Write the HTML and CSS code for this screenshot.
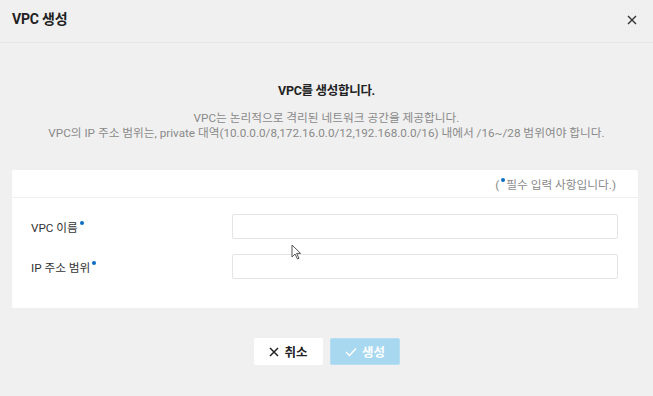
FILE: index.html
```html
<!DOCTYPE html>
<html lang="ko">
<head>
    <meta charset="UTF-8">
    <meta name="viewport" content="width=device-width, initial-scale=1.0">
    <title>VPC 생성</title>
    <link rel="stylesheet" href="styles.css">
</head>
<body>
    <div class="modal">
        <div class="modal-header">
            <h2>VPC 생성</h2>
            <button class="close-btn" aria-label="닫기">
                <svg width="10" height="10" viewBox="0 0 10 10">
                    <path d="M1 1L9 9M9 1L1 9" stroke="#333" stroke-width="1.4" fill="none"/>
                </svg>
            </button>
        </div>

        <div class="intro">
            <h3>VPC를 생성합니다.</h3>
            <p>VPC는 논리적으로 격리된 네트워크 공간을 제공합니다.</p>
            <p>VPC의 IP 주소 범위는, private 대역(10.0.0.0/8,172.16.0.0/12,192.168.0.0/16) 내에서 /16~/28 범위여야 합니다.</p>
        </div>

        <div class="card">
            <div class="card-top">
                <span class="required-note">(<span class="dot"></span>필수 입력 사항입니다.)</span>
            </div>
            <div class="form">
                <div class="form-row">
                    <label class="label">VPC 이름<span class="dot"></span></label>
                    <input type="text" class="input">
                </div>
                <div class="form-row">
                    <label class="label">IP 주소 범위<span class="dot"></span></label>
                    <input type="text" class="input">
                </div>
            </div>
            <!-- mouse pointer captured in the screenshot -->
            <svg class="cursor" width="11" height="16" viewBox="0 0 11 16">
                <path d="M1 1L1 13L4 10L6.5 15L8 14.3L5.6 9.4L9.6 9.4Z" fill="#fff" stroke="#555" stroke-width="1"/>
            </svg>
        </div>

        <div class="actions">
            <button class="btn cancel-btn">
                <svg width="10" height="10" viewBox="0 0 10 10">
                    <path d="M1 1L9 9M9 1L1 9" stroke="#222" stroke-width="1.5" fill="none"/>
                </svg>
                취소
            </button>
            <button class="btn create-btn">
                <svg width="12" height="10" viewBox="0 0 12 10">
                    <path d="M1 5L4.5 8.5L11 1.5" stroke="#fff" stroke-width="1.4" fill="none"/>
                </svg>
                생성
            </button>
        </div>
    </div>
</body>
</html>
```

FILE: styles.css
```css
* {
    margin: 0;
    padding: 0;
    box-sizing: border-box;
    font-family: Roboto, 'Noto Sans CJK KR', sans-serif;
}

body {
    width: 653px;
    height: 396px;
    background: #f0f0f0;
    overflow: hidden;
}

.modal {
    display: flex;
    flex-direction: column;
}

.modal-header {
    height: 43px;
    display: flex;
    align-items: center;
    justify-content: space-between;
    padding: 0 16px 0 12px;
    border-bottom: 1px solid #e6e6e6;
}

.modal-header h2 {
    font-size: 14px;
    font-weight: bold;
    color: #222;
    letter-spacing: -0.2px;
    margin-top: -6px;
}

.close-btn {
    border: none;
    background: none;
    display: flex;
    cursor: pointer;
    margin-top: -3px;
}

.intro {
    text-align: center;
    padding-top: 37px;
    height: 127px;
}

.intro h3 {
    font-size: 12.5px;
    font-weight: bold;
    color: #222;
    letter-spacing: -0.3px;
    margin-bottom: 12px;
}

.intro p {
    font-size: 11.7px;
    line-height: 15px;
    color: #8a8a8a;
}

.card {
    position: relative;
    margin: 0 15px 0 12px;
    height: 138px;
    background: #fff;
    border-radius: 2px;
}

.card-top {
    height: 28px;
    display: flex;
    align-items: center;
    justify-content: flex-end;
    padding-right: 22px;
    border-bottom: 1px solid #f0f0f0;
}

.required-note {
    font-size: 11.7px;
    color: #8a8a8a;
}

.dot {
    display: inline-block;
    width: 4px;
    height: 4px;
    border-radius: 50%;
    background: #0a6fc2;
    vertical-align: top;
    margin: 3px 1px 0 2px;
}

.form {
    display: flex;
    flex-direction: column;
    gap: 15px;
    padding: 16px 20px 0 19px;
}

.form-row {
    display: flex;
    align-items: center;
}

.label {
    width: 201px;
    font-size: 11.7px;
    color: #333;
}

.input {
    width: 386px;
    height: 25px;
    border: 1px solid #e4e4e4;
    border-radius: 2px;
    background: #fff;
    outline: none;
}

.cursor {
    position: absolute;
    left: 279px;
    top: 74px;
}

.actions {
    display: flex;
    justify-content: center;
    gap: 7px;
    padding-top: 30px;
    padding-left: 1px;
}

.btn {
    height: 27px;
    width: 70px;
    border: none;
    border-radius: 2px;
    font-size: 12.5px;
    font-weight: bold;
    display: flex;
    align-items: center;
    justify-content: center;
    gap: 5px;
}

.cancel-btn {
    background: #fff;
    color: #222;
    width: 69px;
}

.create-btn {
    background: #a8d8f0;
    color: #fff;
    border: 1px solid #b6def2;
}
```
